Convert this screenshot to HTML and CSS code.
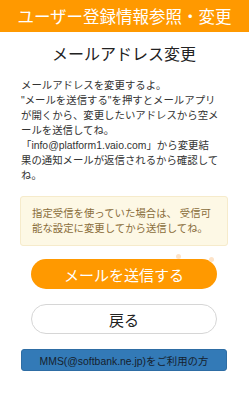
FILE: index.html
```html
<!DOCTYPE html>
<html lang="ja">
<head>
<meta charset="utf-8">
<link rel="stylesheet" href="styles.css">
</head>
<body>
<header class="topbar">ユーザー登録情報参照・変更</header>
<main class="content">
  <h1 class="title">メールアドレス変更</h1>
  <p class="desc">メールアドレスを変更するよ。<br>"メールを送信する"を押すとメールアプリ<br>が開くから、変更したいアドレスから空メ<br>ールを送信してね。<br>「info@platform1.vaio.com」から変更結<br>果の通知メールが返信されるから確認して<br>ね。</p>
  <div class="notice">指定受信を使っていた場合は、 受信可<br>能な設定に変更してから送信してね。</div>
  <div class="send-wrap">
    <span class="dot dot-a"></span>
    <span class="dot dot-b"></span>
    <a class="btn btn-send">メールを送信する</a>
  </div>
  <a class="btn btn-back">戻る</a>
  <a class="btn-mms">MMS(@softbank.ne.jp)をご利用の方</a>
</main>
</body>
</html>
```
FILE: styles.css
```css
html, body {
  margin: 0;
  padding: 0;
  background: #fff;
}
body {
  font-family: "Liberation Sans", "Noto Sans CJK JP", sans-serif;
  color: #333;
  width: 249px;
}
.topbar {
  height: 32px;
  background: #ff9900;
  color: #fff;
  font-family: "Noto Sans CJK JP", sans-serif;
  font-size: 16.5px;
  display: flex;
  align-items: center;
  justify-content: center;
  white-space: nowrap;
}
.content {
  padding: 0 21px 0 20px;
  display: flex;
  flex-direction: column;
}
.title {
  margin: 10px 0 0;
  font-family: "Noto Sans CJK JP", sans-serif;
  font-size: 16px;
  line-height: 22px;
  font-weight: 400;
  text-align: center;
  color: #222;
}
.desc {
  margin: 14px 0 0;
  padding-left: 1px;
  font-size: 10.4px;
  line-height: 15px;
  white-space: nowrap;
  color: #333;
}
.notice {
  margin-top: 13px;
  background: #fdf8e5;
  border: 1px solid #f6ebcb;
  border-radius: 3px;
  padding: 9px 11px;
  font-size: 10.4px;
  line-height: 15px;
  color: #8a6d3b;
  white-space: nowrap;
}
.send-wrap {
  position: relative;
  margin: 13px 11px 0;
  display: flex;
}
.dot {
  position: absolute;
  width: 5px;
  height: 5px;
  border-radius: 50%;
  background: #fde3c8;
}
.dot-a { left: 145px; top: -5px; }
.dot-b { left: 178px; top: -2px; }
.btn {
  box-sizing: border-box;
  height: 30px;
  border-radius: 15px;
  display: flex;
  align-items: center;
  justify-content: center;
  font-family: "Noto Sans CJK JP", sans-serif;
  font-size: 15px;
}
.btn-send {
  flex: 1;
  background: #ff9900;
  color: #fff;
}
.btn-back {
  margin: 15px 11px 0;
  background: #fff;
  border: 1px solid #d6d6d6;
  color: #222;
}
.btn-mms {
  box-sizing: border-box;
  margin: 15px 1px 0;
  height: 22px;
  background: #337ab7;
  border: 1px solid #2e6da4;
  border-radius: 3px;
  display: flex;
  align-items: center;
  justify-content: center;
  font-size: 10.4px;
  color: #15212e;
  white-space: nowrap;
}
```
